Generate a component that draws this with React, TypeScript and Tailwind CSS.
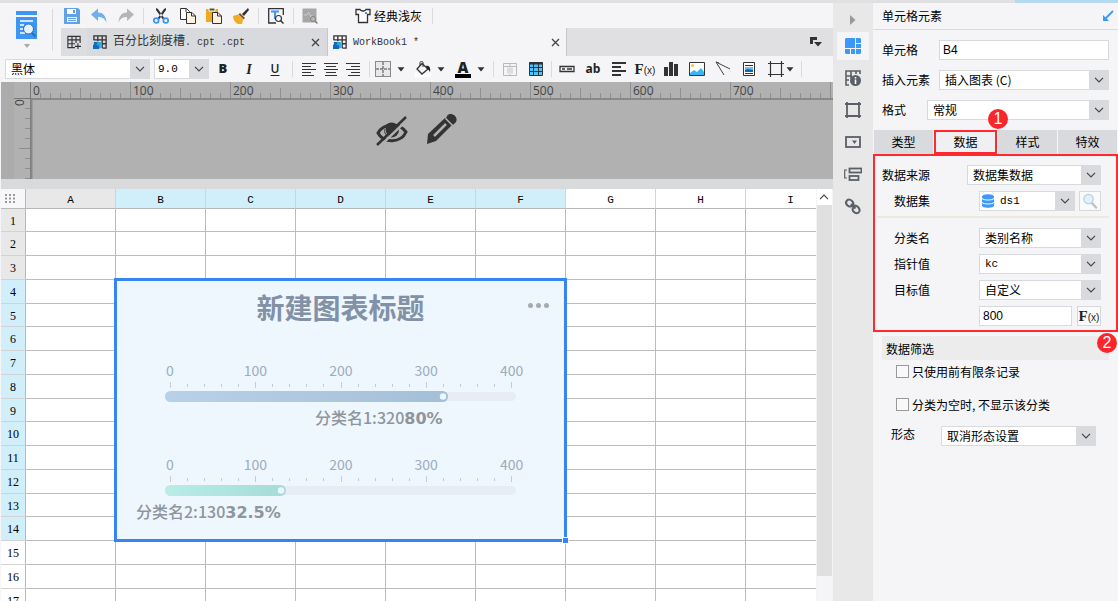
import type { ReactNode } from "react";
import clsx from "clsx";

const columns = ["A", "B", "C", "D", "E", "F", "G", "H", "I"];
const rows = Array.from({ length: 17 }, (_, i) => i + 1);
const selectedColumns = ["B", "C", "D", "E", "F"];

const gauges = [
  { label: "分类名1:320", percent: "80%", end: 334, labelX: 201, from: "#b9d1e8", to: "#a3bfd7" },
  { label: "分类名2:130", percent: "32.5%", end: 172, labelX: 22, from: "#b9ece7", to: "#a5dcd8" },
];

const Chevron = () => (
  <svg viewBox="0 0 10 6" className="h-[6px] w-[10px]" fill="none" stroke="#444" strokeWidth="1.2">
    <path d="M1 .8 5 4.8 9 .8" />
  </svg>
);

const Caret = () => (
  <svg viewBox="0 0 8 5" className="h-[5px] w-2" fill="#333">
    <path d="M.5 .3h7L4 4.6z" />
  </svg>
);

const Close = () => (
  <svg viewBox="0 0 9 9" className="h-[9px] w-[9px]" stroke="#444" strokeWidth="1.3">
    <path d="M1 1l7 7M8 1L1 8" />
  </svg>
);

const Separator = ({ className = "h-4" }: { className?: string }) => (
  <span className={clsx("w-px shrink-0 bg-[#d8dade]", className)} />
);

interface SelectProps {
  id: string;
  label?: string;
  value: string;
  className?: string;
  selectClass?: string;
  children?: ReactNode;
}

const Select = ({ id, label, value, className, selectClass = "pl-[5px]", children }: SelectProps) => (
  <div className={clsx("relative h-5", className)}>
    <select
      id={id}
      aria-label={label}
      defaultValue={value}
      className={clsx("block h-5 w-full appearance-none border border-[#d6d9dd] bg-white pr-5 leading-[18px] text-black outline-none", selectClass)}
    >
      <option>{value}</option>
    </select>
    {children}
    <span className="pointer-events-none absolute inset-y-0 right-0 flex w-5 items-center justify-center bg-[#d8dade]">
      <Chevron />
    </span>
  </div>
);

const Tool = ({ name, className = "w-[26px]", children }: { name: string; className?: string; children: ReactNode }) => (
  <button type="button" aria-label={name} className={clsx("flex h-5 shrink-0 items-center justify-center", className)}>
    {children}
  </button>
);

const Icon = ({ children, size = "h-4 w-4" }: { children: ReactNode; size?: string }) => (
  <svg viewBox="0 0 16 16" className={clsx("shrink-0", size)} fill="none" stroke="#333" strokeWidth="1">
    {children}
  </svg>
);

const Fx = () => (
  <span className="flex items-baseline font-['Liberation_Serif',serif] text-[15px] leading-none font-bold text-[#222]">
    F<span className="font-['Liberation_Sans_Narrow','Liberation_Sans',sans-serif] text-[10px] font-normal">(x)</span>
  </span>
);

const WorkbookIcon = () => (
  <Icon size="h-[14px] w-[14px]">
    <path d="M1 6V1h14v14h-4M1 5.5h14M5.5 1v6M10.5 1v14M10.5 10h4.5" strokeWidth="1.5" />
    <path d="M1 8h4v3H3v4H1z" fill="#0c6cb8" stroke="none" />
    <path d="M0 11h5V8h2v8H0z" fill="#0c6cb8" stroke="none" />
    <path d="M5 8h4v7H7v-3H5z" fill="#2da3e6" stroke="none" />
  </Icon>
);

const QuickTools = () => (
  <div className="flex h-[25px] items-center">
    <Tool name="保存" className="w-[22px]">
      <Icon>
        <path d="M0 0h14l2 2v14H0z" fill="#62a2e4" stroke="none" />
        <path d="M3 1h9v5H3z" fill="#fff" stroke="none" />
        <path d="M9 2h2v3H9z" fill="#62a2e4" stroke="none" />
        <path d="M3 9h10v5H3z" fill="#e9f3fd" stroke="none" />
        <path d="M4 10.5h8M4 12.5h8" stroke="#62a2e4" />
      </Icon>
    </Tool>
    <Tool name="撤销" className="ml-[2px] w-[27px]">
      <Icon><path d="M7 .5v4c5 0 8 3 8.5 10-2-4-4-5.500-8.500-5.500v4L0 6.500z" fill="#72b0ed" stroke="none" /></Icon>
    </Tool>
    <Tool name="恢复" className="w-[27px]">
      <Icon><path d="M9 .5v4c-5 0-8 3-8.500 10 2-4 4-5.500 8.500-5.500v4l7-6.500z" fill="#b5b5b7" stroke="none" /></Icon>
    </Tool>
    <Separator className="ml-1 h-4" />
    <Tool name="剪切" className="ml-[3px] w-[27px]">
      <Icon>
        <path d="M3 0l2 1 6.500 9.500-2 .500L3 2z M13 0l-2 1-6.500 9.500 2 .500L13 2z" fill="#333" stroke="none" />
        <circle cx="3.200" cy="12.500" r="2.400" stroke="#3d95f5" strokeWidth="1.800" />
        <circle cx="12.800" cy="12.500" r="2.400" stroke="#3d95f5" strokeWidth="1.800" />
      </Icon>
    </Tool>
    <Tool name="复制" className="w-[27px]">
      <Icon>
        <path d="M.5.500h6l3 3v8h-9z" fill="#fff" />
        <path d="M6.500 4.500h5.500l3.500 3.500v7.500h-9z" fill="#fdf3df" />
        <path d="M11.500 4.500V8h4M6 .5V4" />
      </Icon>
    </Tool>
    <Tool name="粘贴" className="w-[26px]">
      <Icon>
        <path d="M0 1h12v13H0z" fill="#f0a81c" stroke="none" />
        <path d="M3 0h6v3H3z" fill="#6b4a12" stroke="#fff" />
        <path d="M6.500 4.500h5.500l3.500 3.500v7.500h-9z" fill="#fdf3df" />
        <path d="M11.500 4.500V8h4" />
      </Icon>
    </Tool>
    <Tool name="格式刷" className="w-[27px]">
      <Icon>
        <path d="M15 0l1 2-5 6-2-2z" fill="#333" stroke="none" />
        <path d="M7 5l5 5-1.500 1.500-5-5z" fill="#8a5a12" stroke="none" />
        <path d="M5 6.500l5 5-1 4.500H5c-3-1-5-5-5-8z" fill="#f2ab22" stroke="none" />
      </Icon>
    </Tool>
    <Separator className="ml-1 h-4" />
    <Tool name="查找替换" className="ml-[3px] w-[27px]">
      <Icon>
        <path d="M8 15H.7V.7h14.600V7" strokeWidth="1.300" />
        <path d="M3 3.500h8M7 3.500V11" stroke="#3d95f5" strokeWidth="2" />
        <circle cx="10.500" cy="10.500" r="3" fill="#f5f5f7" strokeWidth="1.200" />
        <path d="M12.700 12.700L15.500 15.500" strokeWidth="1.500" />
      </Icon>
    </Tool>
    <Separator className="ml-1 h-4" />
    <Tool name="性能分析" className="ml-[3px] w-[26px]">
      <Icon>
        <path d="M.500.500h14v14H.500z" fill="#a7a7a7" stroke="none" />
        <path d="M2 7h3l1.500-3L9 9l1-2" stroke="#c9c9c9" />
        <circle cx="11" cy="11" r="2.500" stroke="#838383" fill="#b8b8b8" />
        <path d="M13 13l2.500 2.500" stroke="#838383" strokeWidth="1.500" />
      </Icon>
    </Tool>
    <button type="button" className="ml-8 flex items-center gap-[3px] text-[12px] text-black">
      <Icon>
        <path d="M1 1.500h4c1 2 5 2 6 0h4v5l-2.500 0v8h-9v-8L1 6.500z" fill="#fff" strokeWidth="1.300" />
        <path d="M10 4h2v2h-2z" fill="#3d95f5" stroke="none" />
      </Icon>
      经典浅灰
    </button>
    <Separator className="ml-[10px] h-4" />
  </div>
);

const FileTabs = () => (
  <div className="flex h-7 bg-[#e0e0e2] font-['Liberation_Mono','Noto_Sans_CJK_SC',monospace] text-[12px] text-[#333]">
    <Tool name="新建" className="h-7 w-[26px] bg-[#dcdde0]">
      <Icon size="h-[14px] w-[14px]">
        <path d="M9 14.500H1V1.500h14V9M1 5.500h14M1 10h8M5.700 1.500v13M10.300 1.500V9M12.500 9.500v7M9 13h7" strokeWidth="1.300" />
      </Icon>
    </Tool>
    <div className="flex w-60 items-center bg-[#d8dade] pr-[7px] pl-[6px]">
      <WorkbookIcon />
      <span className="ml-[6px] flex-1 whitespace-pre">
        百分比刻度槽<span className="text-[10px]">. cpt .cpt</span>
      </span>
      <button type="button" aria-label="关闭"><Close /></button>
    </div>
    <div className="flex w-60 items-center border-x border-[#c6c7ca] bg-[#f5f5f7] pr-[6px] pl-[5px]">
      <WorkbookIcon />
      <span className="ml-[6px] flex-1 text-[10px]">WorkBook1 *</span>
      <button type="button" aria-label="关闭"><Close /></button>
    </div>
    <button type="button" aria-label="标签列表" className="mr-[11px] ml-auto">
      <svg viewBox="0 0 12 10" className="h-[10px] w-3" fill="#333">
        <path d="M0 0h7v3H3v4H0zM4 5h8l-4 4.500z" />
      </svg>
    </button>
  </div>
);

const AlignIcon = ({ d }: { d: string }) => (
  <Icon><path d={d} strokeWidth="1.200" /></Icon>
);

const FormatBar = () => (
  <div className="flex h-[26px] items-center pl-1 text-[12px] text-[#222]">
    <Select id="font" label="字体" value="黑体" className="w-[145px]" />
    <Select id="size" label="字号" value="9.0" className="ml-1 w-[55px]" selectClass="pl-[3px] font-['Liberation_Mono',monospace] text-[11px]" />
    <div className="ml-px flex pr-1">
      <Tool name="加粗"><b className="font-['Open_Sans',sans-serif] text-[13px] font-extrabold">B</b></Tool>
      <Tool name="斜体"><i className="font-['Liberation_Serif',serif] text-[14px] font-bold">I</i></Tool>
      <Tool name="下划线"><u className="font-['Open_Sans',sans-serif] text-[12px] font-semibold underline-offset-2">U</u></Tool>
    </div>
    <Separator />
    <div className="flex px-[5px]">
      <Tool name="左对齐" className="w-[22px]"><AlignIcon d="M1 2.500h14M1 5.500h9M1 8.500h14M1 11.500h9M1 14.500h12" /></Tool>
      <Tool name="居中" className="w-[22px]"><AlignIcon d="M1 2.500h14M3 5.500h10M1 8.500h14M3 11.500h10M2 14.500h12" /></Tool>
      <Tool name="右对齐" className="w-[22px]"><AlignIcon d="M1 2.500h14M6 5.500h9M1 8.500h14M6 11.500h9M3 14.500h12" /></Tool>
    </div>
    <Separator />
    <div className="flex gap-[2px] pl-[5px]">
      <Tool name="边框" className="w-[38px] gap-[6px] pr-2">
        <Icon>
          <path d="M.500.500h15v15H.500z" fill="#e8e8ea" stroke="#222" strokeDasharray="1 1" />
          <path d="M8 1v14M1 8h14" stroke="#444" strokeDasharray="3 1" />
        </Icon>
        <Caret />
      </Tool>
      <Tool name="填充" className="w-[38px] gap-[6px] pr-2">
        <Icon>
          <path d="M0 12h16v4H0z" fill="#fff" stroke="none" />
          <path d="M7 2.500l6 5.500-6 5-5-5z" strokeWidth="1.300" fill="#f5f5f7" />
          <path d="M5 5V1.500c0-1.500 3-1.500 3 0V6" />
          <path d="M11 5c3-1 5 2 4 6-1-2-2-3-3-3z" fill="#222" stroke="none" />
        </Icon>
        <Caret />
      </Tool>
      <Tool name="字体颜色" className="w-[38px] gap-[6px] pr-2">
        <span className="flex w-4 flex-col items-center border-b-4 border-black font-['Open_Sans',sans-serif] text-[15px] leading-[13px] font-extrabold">A</span>
        <Caret />
      </Tool>
    </div>
    <Separator />
    <div className="flex pr-[2px] pl-[3px]">
      <Tool name="合并">
        <Icon>
          <path d="M1.500 2.500h13v12h-13zM1.500 5.500h13M8 2.500v3M8 13v1.500" stroke="#b9b9bb" />
          <path d="M5 6.500h6v6H5z" fill="#dcdcde" stroke="none" />
        </Icon>
      </Tool>
      <Tool name="表格">
        <Icon>
          <path d="M1.500 1.500h13v13h-13z" fill="#4cc3fb" />
          <path d="M1 2.500h14" strokeWidth="2" />
          <path d="M1 6.500h14M1 10.500h14M5.500 2v13M10.500 2v13" />
        </Icon>
      </Tool>
    </div>
    <Separator />
    <div className="flex pl-[2px]">
      <Tool name="文本框"><Icon><path d="M1 5.500h14v5H1zM3 8h3M8 8h5" strokeWidth="1.300" /></Icon></Tool>
      <Tool name="文本"><b className="font-['Open_Sans',sans-serif] text-[12px] font-bold">ab</b></Tool>
      <Tool name="富文本"><Icon><path d="M1 2h14M1 6h9M1 10h14M1 14h9" strokeWidth="2" /></Icon></Tool>
      <Tool name="公式"><Fx /></Tool>
      <Tool name="图表"><Icon><path d="M1 6h4v9H1zM6 1h4v14H6zM11 3h4v12h-4z" fill="#333" stroke="none" /></Icon></Tool>
      <Tool name="图片">
        <Icon>
          <path d="M.500 1.500h15v13H.500z" fill="#fff" />
          <circle cx="3.500" cy="4.500" r="1.500" fill="#fbc04a" stroke="none" />
          <path d="M1 12l4-3 3 2 4-4 3 4v3H1z" fill="#33b8f3" stroke="none" />
        </Icon>
      </Tool>
      <Tool name="斜线"><Icon><path d="M1 1l14 7M1 1l8 13M1 1l3 1" stroke="#444" /></Icon></Tool>
      <Tool name="子报表">
        <Icon>
          <path d="M2.500 1.500h11v13h-11z" fill="#fff" />
          <path d="M4 4.500h8M4 12.500h8" />
          <path d="M4 6h8v5H4z" fill="#6dbdf7" stroke="none" />
          <path d="M4 11V9l3-1 5 1v2z" fill="#1666ac" stroke="none" />
        </Icon>
      </Tool>
      <Tool name="悬浮元素" className="w-[38px] gap-[2px]">
        <Icon><path d="M2.500 0v16M13.500 0v16M0 2.500h16M0 13.500h16" strokeWidth="1.200" /></Icon>
        <Caret />
      </Tool>
    </div>
    <Separator className="ml-[1px] h-4" />
  </div>
);

const Ruler = () => (
  <svg className="absolute inset-0 h-full w-full" fontFamily="'Open Sans', sans-serif" fontSize="12" fill="#444">
    <path d="M0 0h13v97H0z" fill="#acacac" />
    {Array.from({ length: 220 }, (_, i) => {
      const height = i % 10 === 0 ? 16 : i % 5 === 0 ? 10 : 5;
      return <path key={i} d={`M${29.5 + i * 10} ${16 - height}v${height}`} stroke="#8f8f8f" />;
    })}
    {Array.from({ length: 8 }, (_, i) => (
      <text key={i} x={32 + i * 100} y="13">{i * 100}</text>
    ))}
    {Array.from({ length: 8 }, (_, i) => (
      <path key={i} d={`M${i === 4 ? 18 : 24} ${26.5 + i * 10}H29`} stroke="#8f8f8f" />
    ))}
    <path d="M13 16.500H30M29.500 0V97" stroke="#777" fill="none" />
    <path d="M30 17H2300M30.500 17V97" stroke="#888" strokeWidth="2" fill="none" />
    <text transform="translate(23 24) rotate(-90)">0</text>
  </svg>
);

const ReportPane = () => (
  <div className="relative flex h-[97px] justify-center overflow-hidden bg-[#b1b1b1]">
    <Ruler />
    <div className="relative flex items-center gap-[18px] text-[#333]">
      <button type="button" aria-label="隐藏">
        <svg viewBox="0 0 32 30" className="h-[30px] w-8" fill="none" stroke="#333">
          <path d="M2 17C7 8 22 5 30 16 25 27 8 28 2 17z" strokeWidth="3" />
          <circle cx="15.500" cy="14" r="7.500" fill="#333" stroke="none" />
          <path d="M9 12c0 4 1 6 4 8" stroke="#b1b1b1" strokeWidth="1" />
          <path d="M3 31L33 2" stroke="#b1b1b1" strokeWidth="2.500" />
          <path d="M1 29L30 1" strokeWidth="2.500" />
        </svg>
      </button>
      <button type="button" aria-label="编辑" className="-mt-1">
        <svg viewBox="0 0 32 32" className="h-8 w-8" fill="#333">
          <path d="M1 31l1-10L19 5l7 7L10 28z" />
          <path d="M21 3c3-5 12 0 9 6l-3 3-7-7z" />
          <path d="M8 23L20 11" stroke="#b1b1b1" strokeWidth="2.500" />
          <path d="M19.500 5.500l7 7" stroke="#b1b1b1" strokeWidth="1.200" />
        </svg>
      </button>
    </div>
  </div>
);

const GaugeChart = () => (
  <div className="absolute top-[89px] left-[113px] h-[264px] w-[453px] border-[3px] border-[#3685f2] bg-[#eef6fe]">
    <h2 className="pt-[7px] text-center text-[28px] leading-[38px] font-bold text-[#8291a5]">新建图表标题</h2>
    <button type="button" aria-label="更多" className="absolute top-[22px] right-[15px] flex gap-[3px]">
      {[0, 1, 2].map((dot) => (
        <span key={dot} className="h-[5px] w-[5px] rounded-full bg-[#a5abb5]" />
      ))}
    </button>
    <svg viewBox="3 50 447 211" className="absolute top-[47px] left-0 h-[211px] w-[447px] font-['Noto_Sans_CJK_SC',sans-serif]">
      {gauges.map((gauge, g) => (
        <g key={gauge.label} transform={`translate(0 ${g * 94})`}>
          <defs>
            <linearGradient id={`fill${g}`}>
              <stop offset="0" stopColor={gauge.from} />
              <stop offset="1" stopColor={gauge.to} />
            </linearGradient>
          </defs>
          {[0, 100, 200, 300, 400].map((value) => (
            <text key={value} x={56 + value * 0.854} y="98" textAnchor="middle" fontSize="14" fill="#9aadc0">{value}</text>
          ))}
          {Array.from({ length: 21 }, (_, i) => (
            <path key={i} d={`M${56.5 + Math.round(i * 17.05)} ${i % 5 ? 106 : 104}V${i % 5 ? 109 : 110}`} stroke="#c3ccd6" />
          ))}
          <rect x="51" y="114" width="351" height="9" rx="4.500" fill="#e6edf5" />
          <rect x="51" y="113" width={gauge.end - 51} height="11" rx="5.500" fill={`url(#fill${g})`} />
          <circle cx={gauge.end - 5} cy="118.500" r="3.200" fill="#eef6fe" />
          <text x={gauge.labelX} y="146" fontSize="16" fontWeight="500" fill="#8f959c">
            {gauge.label}
            <tspan fontFamily="DejaVu Sans" fontWeight="700">{gauge.percent}</tspan>
          </text>
        </g>
      ))}
    </svg>
    <span className="absolute -right-[5px] -bottom-[5px] h-[7px] w-[7px] border border-white bg-[#3685f2]" />
  </div>
);

const Sheet = () => (
  <div className="flex min-h-0 flex-1 border-t-[10px] border-[#d9dadc]">
    <div className="relative min-w-0 flex-1 overflow-hidden bg-white">
      <table className="w-[835px] table-fixed border-separate border-spacing-0 font-['Liberation_Serif',serif] text-[12px] leading-3 text-black">
        <thead>
          <tr className="h-5">
            <th className="w-[25px] border-r border-b border-[#b8b8b8] bg-[#f7f7f9] p-0">
              <svg viewBox="0 0 11 9" className="ml-1 h-[9px] w-[11px]" fill="#999">
                <path d="M0 0h2v2H0zM4 0h2v2H4zM8 0h2v2H8zM0 3.500h2v2H0zM4 3.500h2v2H4zM8 3.500h2v2H8zM0 7h2v2H0zM4 7h2v2H4zM8 7h2v2H8z" />
              </svg>
            </th>
            {columns.map((column) => (
              <th
                key={column}
                className={clsx(
                  "w-[90px] border-r border-b border-r-[#d3d3d6] border-b-[#b8b8b8] p-0 pt-[2px] font-['Liberation_Mono',monospace] text-[11px] font-normal",
                  column === "A" ? "bg-[#e8e8e8]" : selectedColumns.includes(column) ? "bg-[#d0effb]" : "bg-white"
                )}
              >
                {column}
              </th>
            ))}
          </tr>
        </thead>
        <tbody>
          {rows.map((row) => (
            <tr key={row} className={row % 4 === 1 ? "h-[23px]" : "h-6"}>
              <th
                className={clsx(
                  "border-r border-b border-r-[#b8b8b8] border-b-[#d3d3d6] p-0 pt-px font-normal",
                  row < 4 ? "bg-[#e8e8e8]" : row < 15 ? "bg-[#d0effb]" : "bg-white"
                )}
              >
                {row}
              </th>
              {columns.map((column) => (
                <td key={column} className="border-r border-b border-[#bcbcbc] p-0" />
              ))}
            </tr>
          ))}
        </tbody>
      </table>
      <GaugeChart />
    </div>
    <div className="flex w-[17px] flex-col border-x border-[#f3f3f3] bg-[#f5f5f7]">
      <button type="button" aria-label="向上滚动" className="flex h-4 shrink-0 rotate-180 items-center justify-center bg-white">
        <Chevron />
      </button>
      <div className="h-[371px] bg-[#e0e0e0]" />
    </div>
  </div>
);

const RailIcon = ({ children }: { children: ReactNode }) => (
  <svg viewBox="0 0 18 18" className="h-[18px] w-[18px]" fill="none" stroke="#5b5f68" strokeWidth="1.800">
    {children}
  </svg>
);

const Rail = () => (
  <nav className="flex w-10 shrink-0 flex-col items-center bg-[#e8e8e8]">
    <button type="button" aria-label="收起" className="flex h-[29px] items-center pt-1">
      <svg viewBox="0 0 6 10" className="h-[10px] w-[6px]" fill="#999"><path d="M0 0l5.500 5L0 10z" /></svg>
    </button>
    <button type="button" aria-label="单元格元素" className="flex h-7 w-8 items-center justify-center bg-[#f5f5f7]">
      <svg viewBox="0 0 16 16" className="h-4 w-4" fill="#3d98fb">
        <path d="M1 0h9v10H0V1zM11 0h4l1 1v4h-5zM11 6h5v4h-5zM0 11h5v5H1l-1-1zM6 11h4v5H6zM11 11h5v4l-1 1h-4z" />
      </svg>
    </button>
    <button type="button" aria-label="单元格属性" className="mt-[2px] flex h-8 items-center">
      <RailIcon>
        <path d="M5 16H2V2h14v3M2 7h6M7 2v7M12 2v3M2 11h3" strokeWidth="1.600" />
        <circle cx="11.500" cy="11.500" r="5.500" fill="#5b5f68" stroke="none" />
        <path d="M11.500 8v1.500M11.500 10.500V15" stroke="#fff" strokeWidth="1.600" />
      </RailIcon>
    </button>
    <button type="button" aria-label="悬浮元素" className="flex h-8 items-center">
      <RailIcon><path d="M3 3h12v12H3zM1 3h3M14 3h3M1 15h3M14 15h3M3 1v2M15 1v2M3 15v2M15 15v2" /></RailIcon>
    </button>
    <button type="button" aria-label="控件设置" className="flex h-8 items-center">
      <RailIcon>
        <rect x="2" y="4" width="14" height="10" />
        <path d="M8 7.500h5L10.500 11z" fill="#5b5f68" stroke="none" />
      </RailIcon>
    </button>
    <button type="button" aria-label="条件属性" className="flex h-8 items-center">
      <RailIcon>
        <rect x="5.500" y="3.500" width="12" height="4" />
        <rect x="5.500" y="11" width="9" height="4" />
        <path d="M3 5H.700v8H3" strokeWidth="1.200" />
      </RailIcon>
    </button>
    <button type="button" aria-label="超级链接" className="flex h-8 items-center">
      <RailIcon>
        <path d="M8 9c-2 1-3 1-4.500-.500S1.500 5 3 3.500s3.500-1 5 .500 2 3 .500 4.500M9 9c2-1 3-1 5 1s2 3.500 1 5-3.500 1.500-5 0-2-3-.500-4.500M7 7l4.500 4.500" strokeWidth="2" />
      </RailIcon>
    </button>
  </nav>
);

const Badge = ({ children, className }: { children: ReactNode; className: string }) => (
  <span className={clsx("absolute z-10 flex h-5 w-5 items-center justify-center rounded-full bg-[#fb262c] font-['Liberation_Sans',sans-serif] text-[16px] leading-none text-white", className)}>
    {children}
  </span>
);

const FieldRow = ({ id, text, wide, children }: { id: string; text: string; wide?: boolean; children: ReactNode }) => (
  <div className="flex h-5 items-center">
    <label htmlFor={id} className={wide ? "w-[85px]" : "w-[97px] pl-3"}>{text}</label>
    {children}
  </div>
);

const PropertyPanel = () => (
  <aside className="w-[245px] shrink-0 bg-[#f5f5f7] text-[12px] leading-5 text-black">
    <header className="flex h-[27px] items-center justify-between border-b border-[#d9dadd] pr-1 pl-[9px]">
      <h1>单元格元素</h1>
      <svg viewBox="0 0 12 12" className="h-3 w-3" fill="none" stroke="#3d98fb" strokeWidth="1.800">
        <path d="M11 1L2 10" />
        <path d="M1 5v6h6z" fill="#3d98fb" stroke="none" />
      </svg>
    </header>
    <div className="flex flex-col gap-[10px] px-[9px] py-[10px]">
      <div className="flex h-5 items-center">
        <label htmlFor="cell" className="w-[57px]">单元格</label>
        <input id="cell" defaultValue="B4" className="h-5 min-w-0 flex-1 border border-[#d6d9dd] bg-white px-[3px] font-['Liberation_Sans',sans-serif] text-[12px] outline-none" />
      </div>
      <div className="flex h-5 items-center">
        <label htmlFor="element" className="w-[57px]">插入元素</label>
        <Select id="element" value="插入图表 (C)" className="flex-1" />
      </div>
      <div className="flex h-5 items-center">
        <label htmlFor="format" className="w-[45px]">格式</label>
        <Select id="format" value="常规" className="flex-1" />
      </div>
    </div>
    <div className="relative flex h-6 gap-px px-px">
      {["类型", "数据", "样式", "特效"].map((tab) => (
        <button
          key={tab}
          type="button"
          className={clsx("flex-1", tab === "数据" ? "border-2 border-[#ff2a2e] bg-[#f0f0f2]" : "bg-[#d8dade]")}
        >
          {tab}
        </button>
      ))}
      <Badge className="-top-[21px] left-[115px]">1</Badge>
    </div>
    <section className="relative border-2 border-[#ff2a2e] pt-[9px] pb-1">
      <div className="flex flex-col gap-[6px] pr-[15px] pl-[7px]">
        <FieldRow id="source" text="数据来源" wide>
          <Select id="source" value="数据集数据" className="flex-1" />
        </FieldRow>
        <FieldRow id="dataset" text="数据集">
          <Select id="dataset" value="ds1" className="flex-1" selectClass="pl-5 font-['Liberation_Mono',monospace] text-[11px]">
            <svg viewBox="0 0 12 14" className="pointer-events-none absolute top-[3px] left-[3px] h-[14px] w-3" fill="#3d98fb">
              <path d="M0 2.500c0-3 12-3 12 0v9c0 3-12 3-12 0z" />
              <path d="M0 4.500c2 2 10 2 12 0M0 8.500c2 2 10 2 12 0" fill="none" stroke="#fff" />
            </svg>
          </Select>
          <button type="button" aria-label="预览" className="ml-1 flex h-5 w-[22px] items-center justify-center border border-[#d6d9dd] bg-[#fafafa]">
            <svg viewBox="0 0 16 16" className="h-4 w-4" fill="none">
              <path d="M9.500 9.500L14 14.500" stroke="#c2c2c2" strokeWidth="2.500" strokeLinecap="round" />
              <circle cx="6.500" cy="6" r="4.700" fill="#dff1fc" stroke="#b9cfdf" strokeWidth="1.200" />
            </svg>
          </button>
        </FieldRow>
      </div>
      <div className="mt-[5px] mr-[7px] mb-[10px] ml-[2px] h-[2px] bg-[#eee9df]" />
      <div className="flex flex-col gap-[6px] pr-[15px] pl-[7px]">
        <FieldRow id="category" text="分类名">
          <Select id="category" value="类别名称" className="flex-1" />
        </FieldRow>
        <FieldRow id="pointer" text="指针值">
          <Select id="pointer" value="kc" className="flex-1" selectClass="pl-[5px] font-['Liberation_Mono',monospace] text-[11px]" />
        </FieldRow>
        <FieldRow id="target" text="目标值">
          <Select id="target" value="自定义" className="flex-1" />
        </FieldRow>
        <div className="flex h-5 pl-[97px]">
          <input aria-label="目标值" defaultValue="800" className="h-5 min-w-0 flex-1 border border-[#d6d9dd] bg-white px-[3px] font-['Liberation_Sans',sans-serif] text-[12px] outline-none" />
          <button type="button" className="ml-[5px] flex h-5 w-6 items-center justify-center border border-[#d6d9dd] bg-[#fafafa]">
            <Fx />
          </button>
        </div>
      </div>
      <Badge className="-right-[1px] -bottom-[23px]">2</Badge>
    </section>
    <h2 className="mx-[9px] mt-1 h-6 bg-[#ececec] pl-1 leading-[26px]">数据筛选</h2>
    <div className="flex flex-col gap-[10px] pr-[22px] pl-[23px]">
      {["只使用前有限条记录", "分类为空时, 不显示该分类"].map((text) => (
        <label key={text} className="flex h-[23px] items-center gap-[3px]">
          <input type="checkbox" className="h-[13px] w-[13px] appearance-none border border-[#999] bg-[#f9f9fa]" />
          {text}
        </label>
      ))}
    </div>
    <div className="mt-[10px] flex pr-[22px] pl-[18px]">
      <label htmlFor="shape" className="w-[50px] leading-4">形态</label>
      <Select id="shape" value="取消形态设置" className="flex-1" />
    </div>
  </aside>
);

const App = () => (
  <div className="flex h-screen flex-col overflow-hidden bg-[#f5f5f7] font-['Noto_Sans_CJK_SC',sans-serif]">
    <div className="flex h-[3px] shrink-0 bg-[#e0e0e2]">
      <div className="ml-auto w-[103px] bg-[#b5d9f0]" />
    </div>
    <div className="flex min-h-0 flex-1">
      <main className="flex min-w-0 flex-1 flex-col pl-px">
        <div className="flex">
          <div className="flex w-[60px] shrink-0 items-center">
            <button type="button" aria-label="模板预览" className="flex w-[51px] flex-col items-center gap-[5px]">
              <svg viewBox="0 0 21 28" className="h-7 w-[21px]">
                <path d="M0 0h21v4H0zM0 6h21v22H0z" fill="#3d95f5" />
                <path d="M4 10h13M4 14h4M4 18h4M4 22h5" stroke="#fff" strokeWidth="1.500" />
                <circle cx="12.500" cy="18" r="5" fill="#e6f2fe" stroke="#2371bd" />
                <path d="M16 22l3.500 3.500" stroke="#2371bd" strokeWidth="2" />
              </svg>
              <svg viewBox="0 0 6 4" className="h-1 w-[6px]" fill="#aaa"><path d="M0 0h6L3 4z" /></svg>
            </button>
            <Separator className="h-[42px]" />
          </div>
          <div className="min-w-0 flex-1">
            <QuickTools />
            <FileTabs />
          </div>
        </div>
        <FormatBar />
        <ReportPane />
        <Sheet />
      </main>
      <Rail />
      <PropertyPanel />
    </div>
  </div>
);

export default App;
